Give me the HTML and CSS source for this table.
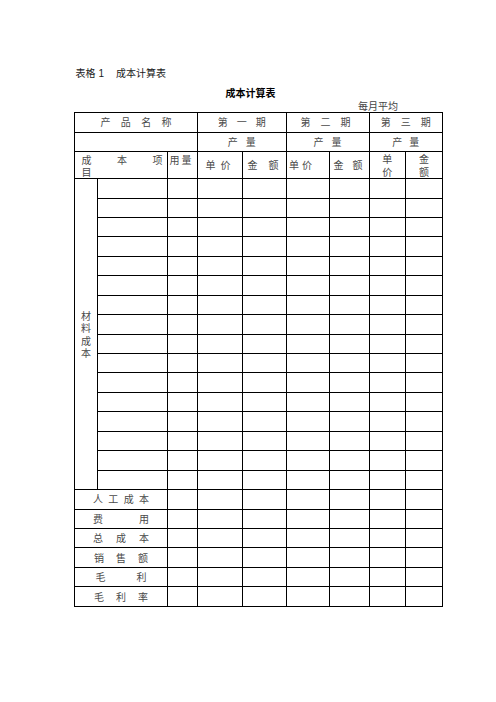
FILE: index.html
```html
<!DOCTYPE html>
<html lang="zh">
<head>
<meta charset="utf-8">
<title>成本计算表</title>
<link rel="stylesheet" href="styles.css">
</head>
<body>
<div class="page">
  <div class="caption"><span>表格</span><span class="num">1</span><span>成本计算表</span></div>
  <div class="title">成本计算表</div>
  <div class="unit">每月平均</div>
  <table class="cost">
    <colgroup>
      <col class="c1"><col class="c2"><col class="c3"><col class="c4"><col class="c5"><col class="c6"><col class="c7"><col class="c8"><col class="c9">
    </colgroup>
    <tr class="rh1">
      <td colspan="3" class="ctr"><span class="ls s103">产品名称</span></td>
      <td colspan="2" class="ctr"><span class="ls s9">第一期</span></td>
      <td colspan="2" class="ctr sh-l"><span class="ls s10">第二期</span></td>
      <td colspan="2" class="ctr"><span class="ls s10">第三期</span></td>
    </tr>
    <tr class="rh2">
      <td colspan="3"></td>
      <td colspan="2" class="ctr"><span class="ls s8">产量</span></td>
      <td colspan="2" class="ctr"><span class="ls s8">产量</span></td>
      <td colspan="2" class="ctr"><span class="ls s7">产量</span></td>
    </tr>
    <tr class="rh3">
      <td colspan="2" class="item">
        <div class="item-line"><span>成</span><span>本</span><span>项</span></div>
        <div class="item-line2">目</div>
      </td>
      <td class="usage"><span class="ls s2">用量</span></td>
      <td class="p4"><span class="ls s5">单价</span></td>
      <td class="p5"><span class="ls s11">金额</span></td>
      <td class="p6"><span class="ls s3">单价</span></td>
      <td class="p7"><span class="ls s9">金额</span></td>
      <td class="stack">单<br>价</td>
      <td class="stack">金<br>额</td>
    </tr>
    <tr class="rb">
      <td rowspan="16" class="mat"><div class="vert">材料成本</div></td>
      <td></td><td></td><td></td><td></td><td></td><td></td><td></td><td></td>
    </tr>
    <tr class="rb"><td></td><td></td><td></td><td></td><td></td><td></td><td></td><td></td></tr>
    <tr class="rb"><td></td><td></td><td></td><td></td><td></td><td></td><td></td><td></td></tr>
    <tr class="rb"><td></td><td></td><td></td><td></td><td></td><td></td><td></td><td></td></tr>
    <tr class="rb"><td></td><td></td><td></td><td></td><td></td><td></td><td></td><td></td></tr>
    <tr class="rb"><td></td><td></td><td></td><td></td><td></td><td></td><td></td><td></td></tr>
    <tr class="rb"><td></td><td></td><td></td><td></td><td></td><td></td><td></td><td></td></tr>
    <tr class="rb"><td></td><td></td><td></td><td></td><td></td><td></td><td></td><td></td></tr>
    <tr class="rb"><td></td><td></td><td></td><td></td><td></td><td></td><td></td><td></td></tr>
    <tr class="rb"><td></td><td></td><td></td><td></td><td></td><td></td><td></td><td></td></tr>
    <tr class="rb"><td></td><td></td><td></td><td></td><td></td><td></td><td></td><td></td></tr>
    <tr class="rb"><td></td><td></td><td></td><td></td><td></td><td></td><td></td><td></td></tr>
    <tr class="rb"><td></td><td></td><td></td><td></td><td></td><td></td><td></td><td></td></tr>
    <tr class="rb"><td></td><td></td><td></td><td></td><td></td><td></td><td></td><td></td></tr>
    <tr class="rb"><td></td><td></td><td></td><td></td><td></td><td></td><td></td><td></td></tr>
    <tr class="rb"><td></td><td></td><td></td><td></td><td></td><td></td><td></td><td></td></tr>
    <tr class="rb">
      <td colspan="2" class="ctr"><span class="ls s53">人工成本</span></td>
      <td></td><td></td><td></td><td></td><td></td><td></td><td></td>
    </tr>
    <tr class="rb">
      <td colspan="2" class="ctr"><span class="ls s36">费用</span></td>
      <td></td><td></td><td></td><td></td><td></td><td></td><td></td>
    </tr>
    <tr class="rb">
      <td colspan="2" class="ctr"><span class="ls s13">总成本</span></td>
      <td></td><td></td><td></td><td></td><td></td><td></td><td></td>
    </tr>
    <tr class="rb">
      <td colspan="2" class="ctr"><span class="ls s12">销售额</span></td>
      <td></td><td></td><td></td><td></td><td></td><td></td><td></td>
    </tr>
    <tr class="rb">
      <td colspan="2" class="ctr"><span class="ls s31">毛利</span></td>
      <td></td><td></td><td></td><td></td><td></td><td></td><td></td>
    </tr>
    <tr class="rb">
      <td colspan="2" class="ctr"><span class="ls s12">毛利率</span></td>
      <td></td><td></td><td></td><td></td><td></td><td></td><td></td>
    </tr>
  </table>
</div>
</body>
</html>
```

FILE: styles.css
```css
html, body {
  margin: 0;
  padding: 0;
  background: #fff;
}

body {
  font-family: "Noto Sans CJK SC", "Noto Sans", sans-serif;
  color: #000;
}

.page {
  width: 496px;
  box-sizing: border-box;
  padding: 66px 0 0 74px;
}

.caption {
  font-size: 10px;
  line-height: 14px;
  height: 14px;
  padding-left: 1.5px;
  color: #1a1a1a;
  white-space: nowrap;
}

.caption .num {
  font-family: "Liberation Sans", sans-serif;
  margin: 0 12px 0 3px;
}

.title {
  width: 368px;
  box-sizing: border-box;
  padding-right: 15px;
  margin-top: 6px;
  font-size: 10px;
  line-height: 14px;
  height: 14px;
  font-weight: 700;
  text-align: center;
  color: #000;
}

.unit {
  width: 368px;
  box-sizing: border-box;
  padding-right: 44px;
  font-size: 10px;
  line-height: 12px;
  height: 12px;
  text-align: right;
  color: #444;
}

.cost {
  width: 368px;
  table-layout: fixed;
  border-collapse: collapse;
  border: 1.5px solid #000;
  font-size: 10px;
  color: #4a4a4a;
}

.cost td {
  border: 1px solid #000;
  padding: 0;
  line-height: 12px;
  vertical-align: middle;
  white-space: nowrap;
}

.c1 { width: 23px; }
.c2 { width: 70px; }
.c3 { width: 30px; }
.c4 { width: 45px; }
.c5 { width: 43.5px; }
.c6 { width: 43px; }
.c7 { width: 40px; }
.c8 { width: 36.5px; }
.c9 { width: 37px; }

.rh1 { height: 19.5px; }
.rh2 { height: 19px; }
.rh3 { height: 26.5px; }
.rb { height: 19.45px; }

.ctr { text-align: center; }
.cost td.sh-l { padding-right: 4px; }

/* spaced text: letter-spacing without the trailing gap */
.ls {
  display: inline-block;
  letter-spacing: var(--sp);
  margin-right: calc(-1 * var(--sp));
}

.s2 { --sp: 2px; }
.s3 { --sp: 3px; }
.s5 { --sp: 5px; }
.s7 { --sp: 7px; }
.s8 { --sp: 8px; }
.s9 { --sp: 9px; }
.s10 { --sp: 10px; }
.s103 { --sp: 10.3px; }
.s11 { --sp: 11px; }
.s12 { --sp: 12px; }
.s13 { --sp: 13px; }
.s31 { --sp: 31px; }
.s36 { --sp: 36px; }
.s53 { --sp: 5.3px; }

.cost td.p4 { padding-left: 7.5px; }
.cost td.p5 { padding-left: 4.5px; }
.cost td.p6 { padding-left: 2.5px; }
.cost td.p7 { padding-left: 4px; }

.cost td.item {
  vertical-align: top;
  padding: 2.5px 4.5px 0 6.5px;
}

.item-line {
  display: flex;
  justify-content: space-between;
  line-height: 12px;
}

.item-line2 {
  line-height: 11.5px;
}

.cost td.usage {
  vertical-align: top;
  padding: 2px 0 0 1.5px;
}

.cost td.stack {
  text-align: center;
  line-height: 13.3px;
}

.cost td.mat {
  text-align: center;
}

.vert {
  width: 10px;
  margin: 0 auto;
  white-space: normal;
  line-height: 12.5px;
  padding-top: 1px;
}
```
